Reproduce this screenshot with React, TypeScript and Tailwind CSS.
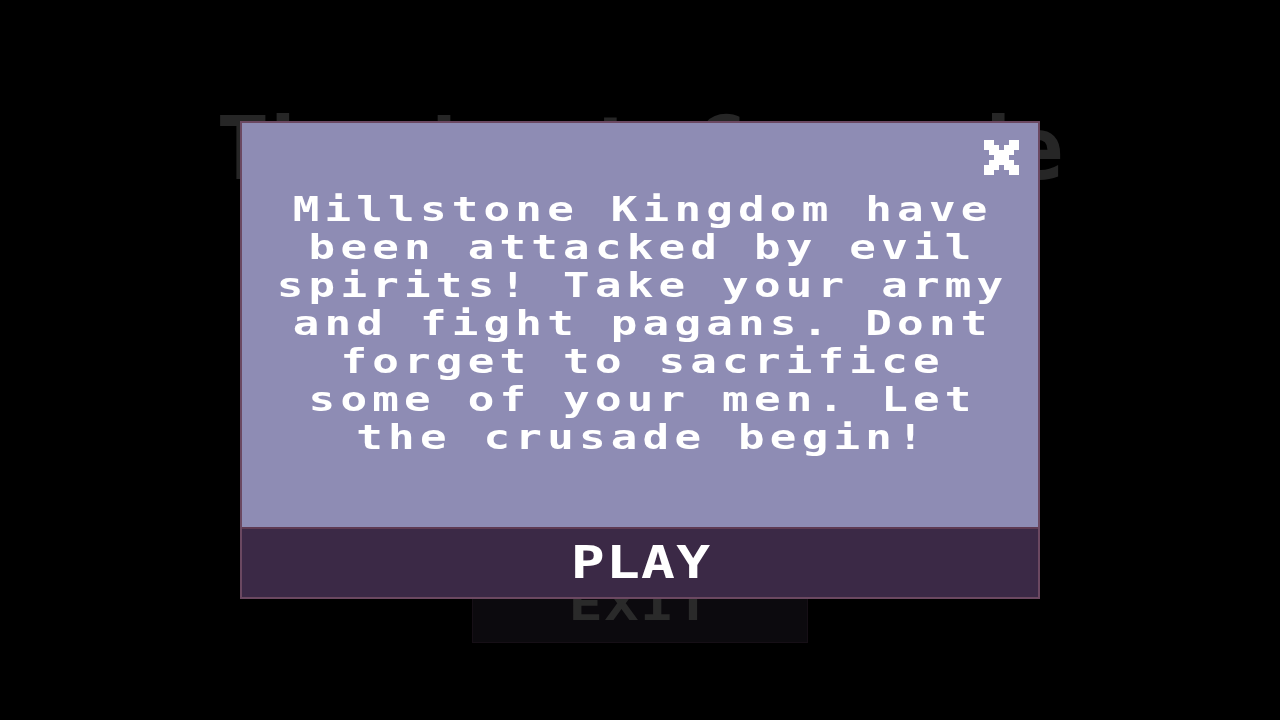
const STORY = [
  'Millstone Kingdom have',
  'been attacked by evil',
  'spirits! Take your army',
  'and fight pagans. Dont',
  'forget to sacrifice',
  'some of your men. Let',
  'the crusade begin!',
]

// close cross rows on a 7x7 grid, [start, end] per filled run
const CROSS: [number, number][][] = [
  [[0, 2], [5, 7]],
  [[0, 3], [4, 7]],
  [[1, 6]],
  [[2, 5]],
  [[1, 6]],
  [[0, 3], [4, 7]],
  [[0, 2], [5, 7]],
]

function PixelClose() {
  return (
    <svg width="35" height="35" viewBox="0 0 7 7" shapeRendering="crispEdges" fill="#ffffff">
      {CROSS.map((runs, y) =>
        runs.map(([a, b]) => <rect key={`${y}-${a}`} x={a} y={y} width={b - a} height="1" />)
      )}
    </svg>
  )
}

function MenuButton({ label }: { label: string }) {
  return (
    <button className="w-[336px] h-[77px] bg-[#0c0a0e] border border-[#160f16] flex items-center justify-center">
      <span className="block scale-x-[1.3] text-[44px] leading-none font-bold tracking-[1px] text-[#2a2a2a]">{label}</span>
    </button>
  )
}

export default function App() {
  return (
    <div className="relative min-h-screen h-[720px] bg-black overflow-hidden font-['DejaVu_Sans_Mono','Liberation_Mono',monospace]">
      {/* Main menu underneath */}
      <div className="flex flex-col items-center pt-[105px]">
        <h1 className="text-[88px] leading-none font-bold text-[#262626]">The Last Crusade</h1>
        <div className="mt-[280px] flex flex-col gap-4">
          <MenuButton label="PLAY" />
          <MenuButton label="EXIT" />
        </div>
      </div>

      {/* Story dialog */}
      <div className="fixed inset-0 flex items-center justify-center">
        <div className="w-[800px] h-[478px] border-2 border-[#6b4861] bg-[#8e8cb4] flex flex-col">
          <div className="relative flex-1">
            <button className="absolute top-[17px] right-[19px]" aria-label="close">
              <PixelClose />
            </button>
            <p className="mt-[67px] scale-x-[1.3] text-center text-white font-bold text-[34px] leading-[38px] tracking-[4px] pl-[4px]">
              {STORY.map((line, i) => (
                <span key={i}>
                  {line}
                  {i < STORY.length - 1 && <br />}
                </span>
              ))}
            </p>
          </div>
          <button className="h-[70px] bg-[#3b2946] border-t-2 border-[#5e3a52] flex items-center justify-center">
            <span className="block scale-x-[1.28] text-white font-bold text-[44px] leading-none tracking-[1px] pl-[1px]">PLAY</span>
          </button>
        </div>
      </div>
    </div>
  )
}
